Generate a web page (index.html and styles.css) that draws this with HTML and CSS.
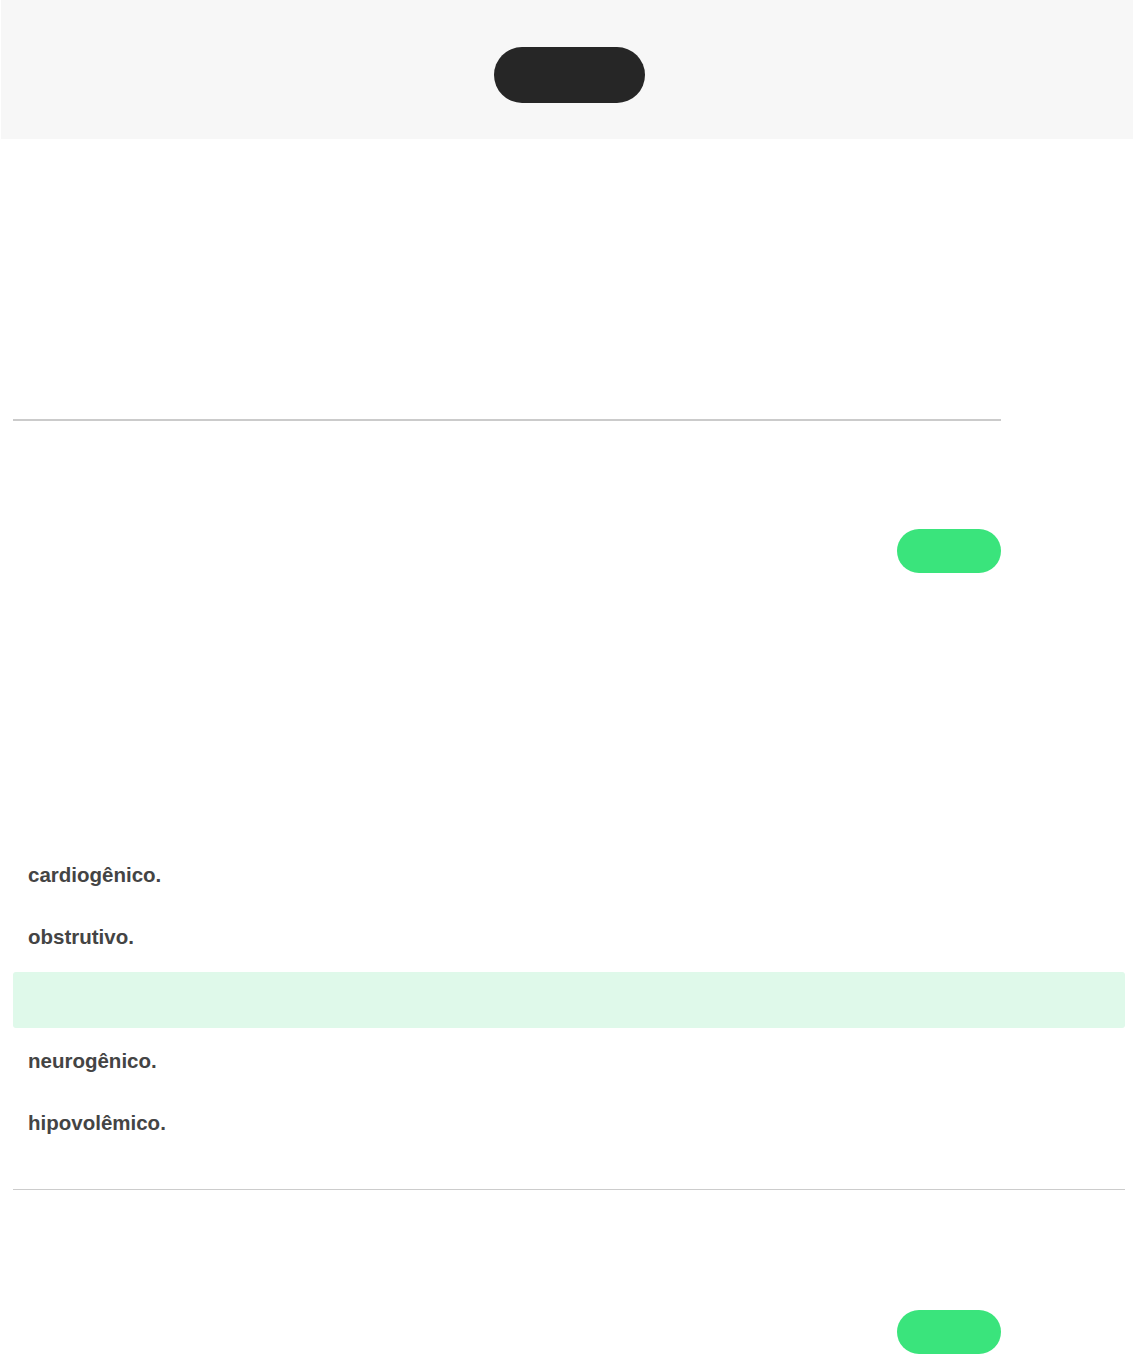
FILE: index.html
```html
<!DOCTYPE html>
<html lang="pt">
<head>
<meta charset="utf-8">
<title>Questão</title>
<link rel="stylesheet" href="styles.css">
</head>
<body>
<header class="topbar">
  <div class="top-pill"></div>
</header>
<main class="content">
  <section class="question q1">
    <div class="rule thick"></div>
    <div class="actions"><button class="btn-green" type="button"></button></div>
  </section>
  <ul class="options">
    <li class="option">cardiogênico.</li>
    <li class="option">obstrutivo.</li>
    <li class="option correct"></li>
    <li class="option">neurogênico.</li>
    <li class="option">hipovolêmico.</li>
  </ul>
  <div class="rule thin"></div>
  <div class="actions second"><button class="btn-green" type="button"></button></div>
</main>
</body>
</html>
```
FILE: styles.css
```css
html, body {
  margin: 0;
  padding: 0;
  background: #ffffff;
  font-family: "Liberation Sans", Arial, sans-serif;
}

.topbar {
  margin-left: 1px;
  height: 139px;
  background: #f7f7f7;
  display: flex;
  justify-content: center;
  align-items: flex-start;
}

.top-pill {
  margin-top: 47px;
  margin-left: 4px;
  width: 151px;
  height: 56px;
  border-radius: 28px;
  background: #262626;
}

.content {
  padding-left: 13px;
  width: 1112px;
}

.rule.thick {
  margin-top: 280px;
  width: 988px;
  height: 2px;
  background: #cbcbcb;
}

.actions {
  width: 988px;
  display: flex;
  justify-content: flex-end;
}

.q1 .actions {
  margin-top: 108px;
}

.btn-green {
  width: 104px;
  height: 44px;
  border: none;
  border-radius: 22px;
  background: #3ae47c;
  padding: 0;
}

.options {
  list-style: none;
  margin: 275px 0 0 0;
  padding: 0;
  display: flex;
  flex-direction: column;
  gap: 6px;
}

.option {
  height: 56px;
  box-sizing: border-box;
  padding-bottom: 2px;
  display: flex;
  align-items: center;
  padding-left: 15px;
  font-size: 20.5px;
  font-weight: 700;
  color: #444444;
  border-radius: 3px;
}

.option.correct {
  background: #dff9ea;
}

.rule.thin {
  margin-top: 37px;
  width: 1112px;
  height: 1px;
  background: #cccccc;
}

.actions.second {
  margin-top: 120px;
}
```
